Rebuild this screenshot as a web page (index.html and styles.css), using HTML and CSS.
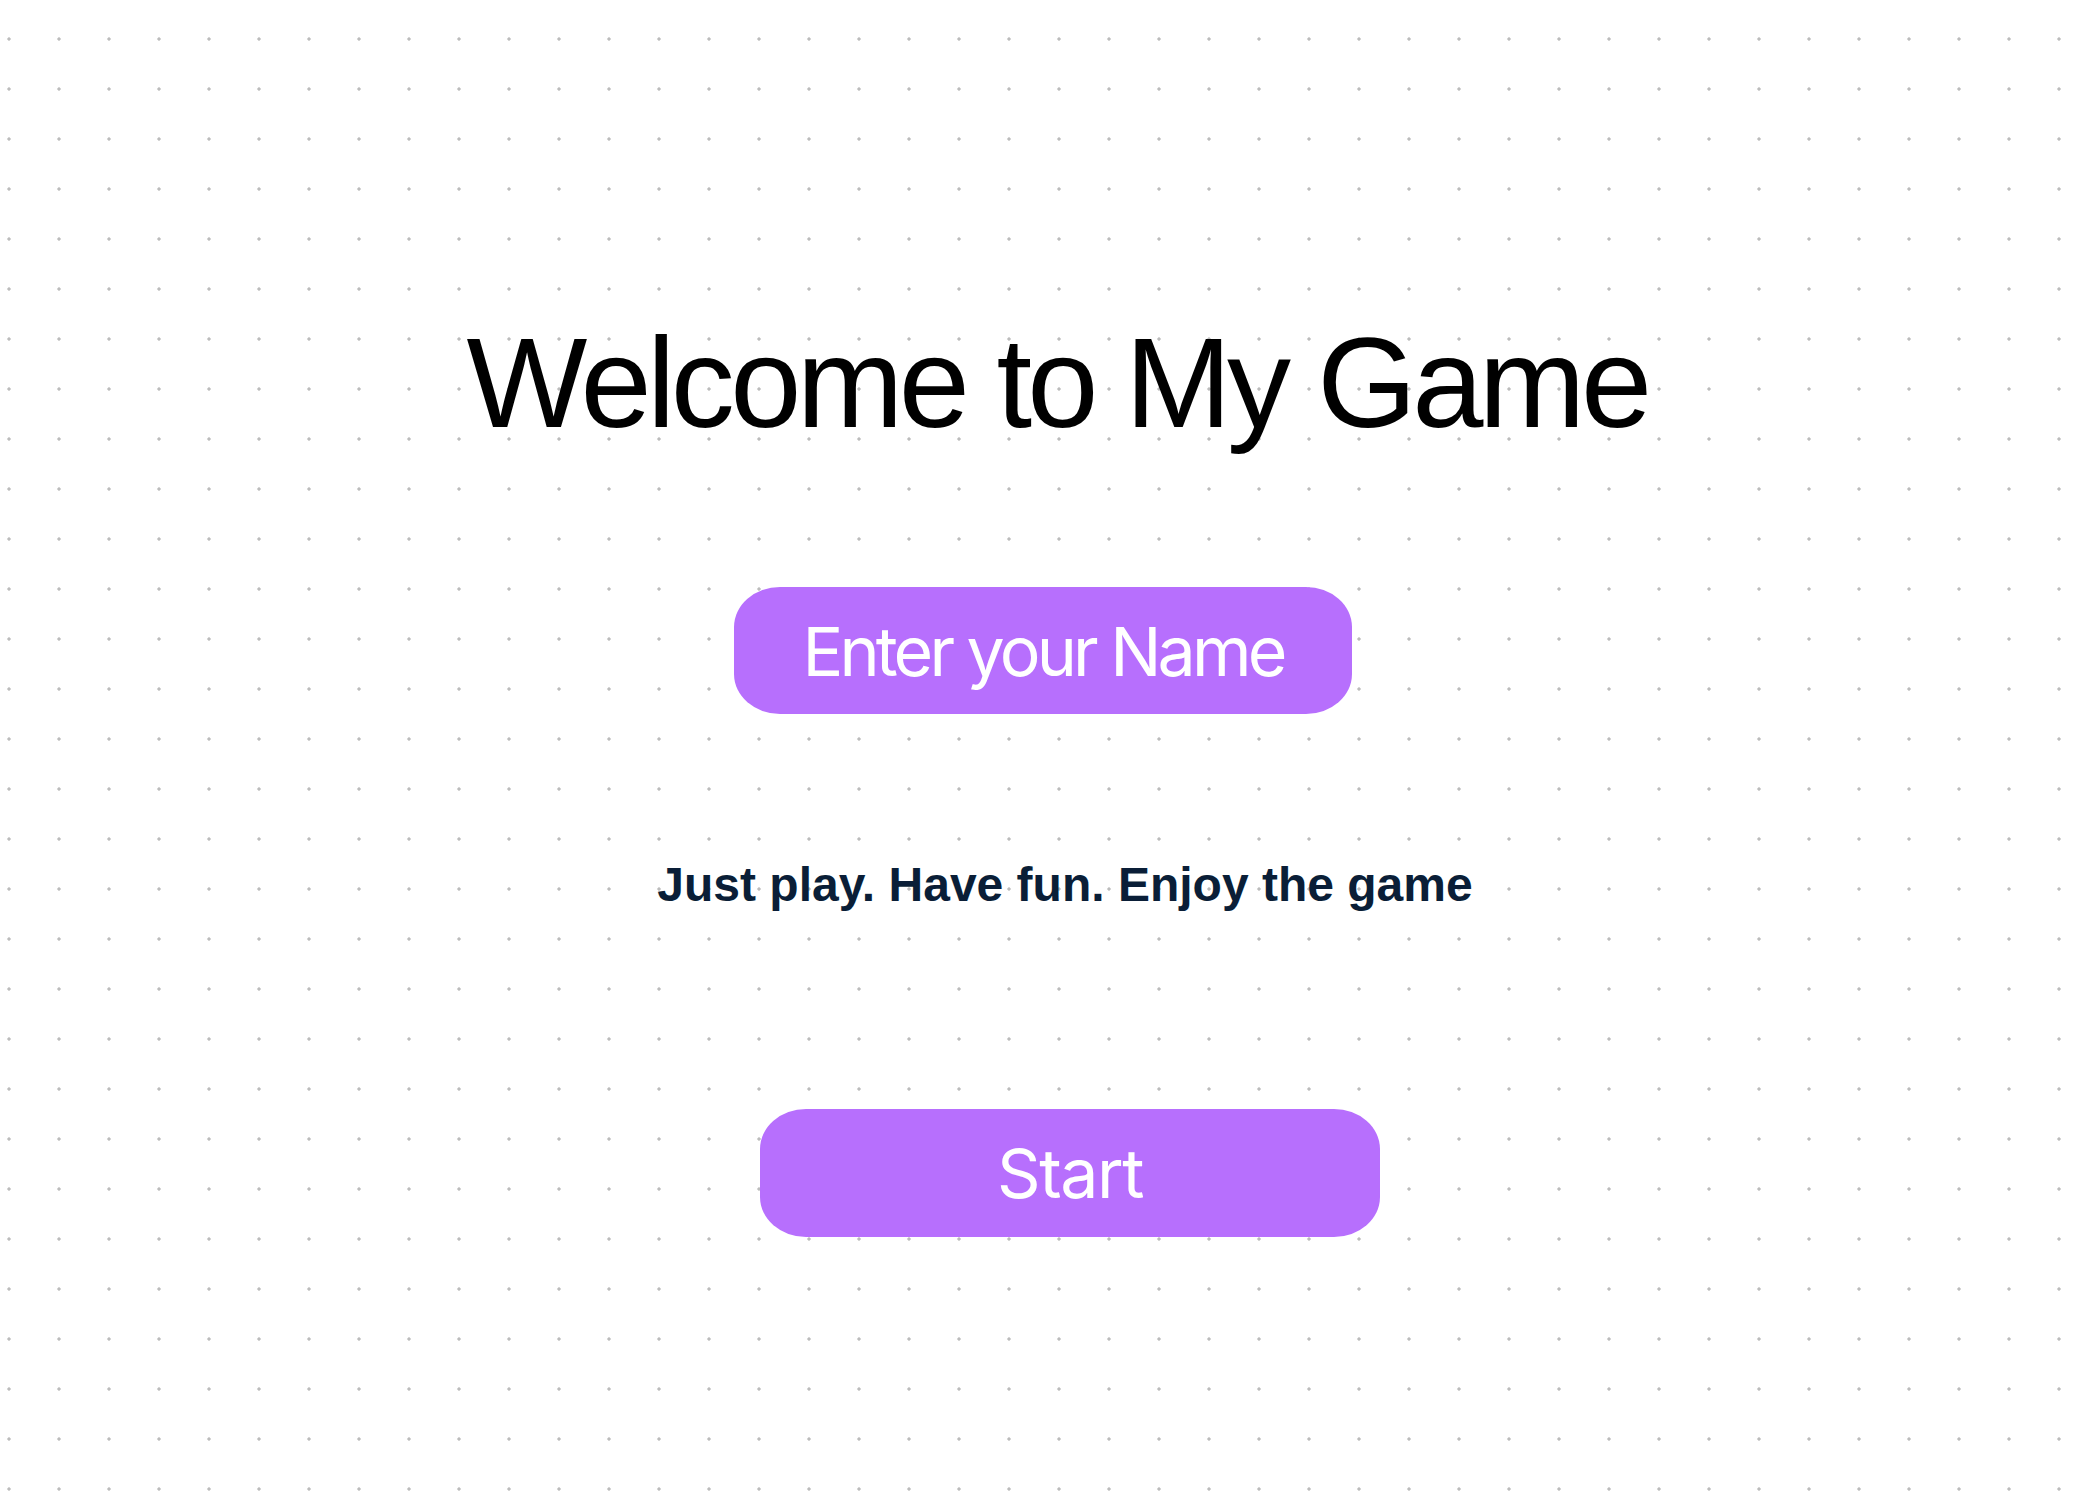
FILE: index.html
```html
<!DOCTYPE html>
<html lang="en">
<head>
<meta charset="utf-8">
<title>My Game</title>
<link rel="stylesheet" href="styles.css">
</head>
<body>
  <main class="screen">
    <h1 class="title">Welcome to My Game</h1>
    <div class="pill name-field">Enter your Name</div>
    <p class="tagline">Just play. Have fun. Enjoy the game</p>
    <button class="pill start-btn" type="button">Start</button>
  </main>
</body>
</html>
```
FILE: styles.css
```css
html, body {
  margin: 0;
  padding: 0;
}

body {
  min-height: 1504px;
  background-color: #ffffff;
  background-image: radial-gradient(circle at center, #bcbcbc 0, #bcbcbc 1.3px, rgba(188,188,188,0) 2px);
  background-size: 50px 50px;
  background-position: -16px 14px;
}

.screen {
  display: flex;
  flex-direction: column;
  align-items: center;
  padding-top: 309px;
}

.title {
  margin: 0 0 0 28px;
  font-family: "Liberation Sans", Arial, sans-serif;
  font-weight: 400;
  font-size: 128px;
  line-height: 148px;
  letter-spacing: -4.6px;
  color: #000000;
}

.pill {
  display: flex;
  align-items: center;
  justify-content: center;
  box-sizing: border-box;
  background: #b76ffd;
  color: #ffffff;
  font-family: Inter, "Noto Sans", sans-serif;
  font-weight: 400;
  font-size: 68px;
  border: none;
  border-radius: 46px / 40px;
  padding: 0;
}

.name-field {
  margin-top: 130px;
  width: 618px;
  height: 127px;
  letter-spacing: -3.8px;
}

.tagline {
  margin: 143px 0 0 44px;
  font-family: "Liberation Sans", Arial, sans-serif;
  font-weight: 700;
  font-size: 48px;
  line-height: 56px;
  color: #0a1e37;
}

.start-btn {
  margin: 196px 0 0 54px;
  width: 620px;
  height: 128px;
  letter-spacing: -1.5px;
}
```
